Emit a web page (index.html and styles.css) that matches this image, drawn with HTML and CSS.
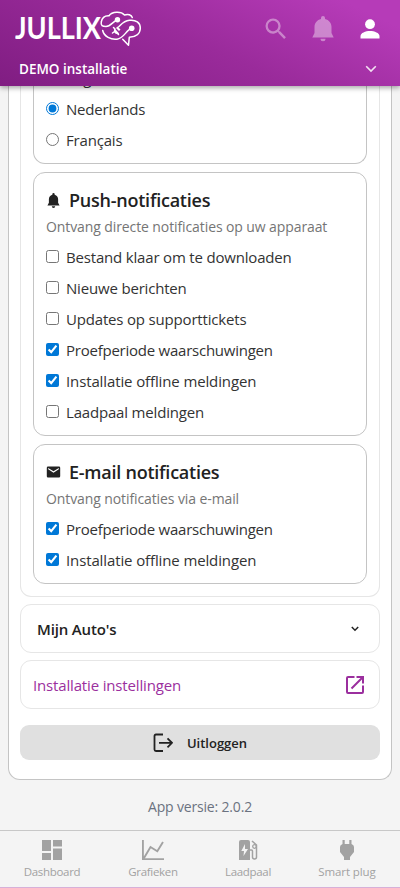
FILE: index.html
```html
<!DOCTYPE html>
<html lang="nl">
<head>
<meta charset="utf-8">
<title>Jullix</title>
<link rel="stylesheet" href="styles.css">
</head>
<body>
<header class="header">
  <div class="topbar">
    <svg class="logo" width="128" height="40" viewBox="0 0 128 40">
      <text class="logo-text" x="0" y="30.500" textLength="86" lengthAdjust="spacingAndGlyphs">JULLIX</text>
      <g fill="none" stroke="#fff" stroke-width="1.500" stroke-linecap="round" stroke-linejoin="round">
        <path d="M102.300 12C98 13 96 18.500 91 18.500C87.500 18.500 85.500 17.500 86.300 14C87 9.500 90 7.500 94 7.700C97 3.500 106 3 109.500 7C113 5.500 116.500 7 117.300 9.500"/>
        <path d="M87.700 22.500C89 28.500 96 32 102 31.200C109 30.500 111 22 116.700 20.300"/>
        <path d="M103.500 19C106 17 108 13 114.500 12.300C121 11.500 125.300 15 125.300 20C125.300 25.500 121 29 114.300 29.300L113.500 37.300L107.700 31.300"/>
        <path d="M97.500 25L99.500 23.500M98.500 19.500L100 21M102 25L103.500 26.500"/>
      </g>
      <g fill="#fff"><circle cx="102.500" cy="11.800" r="2.700"/><circle cx="116.700" cy="20.300" r="2.800"/><path d="M99.500 20.300L104.200 25.400Q101.500 27 99.300 24.500Q98 22.500 99.500 20.300M102.500 18.500l3 3-1.500 1.500-3-3z"/></g>
    </svg>
    <div class="actions">
      <svg class="dim" width="28" height="28" viewBox="0 0 24 24"><path d="M15.500 14h-.79l-.28-.27A6.471 6.471 0 0 0 16 9.500 6.500 6.500 0 1 0 9.500 16c1.610 0 3.090-.59 4.230-1.570l.27.28v.79l5 4.990L20.490 19zm-6 0C7.010 14 5 11.990 5 9.500S7.010 5 9.500 5 14 7.010 14 9.500 11.990 14 9.500 14"/></svg>
      <svg class="dim" width="22" height="26" viewBox="0 0 22 26"><path d="M9 3V2a2 2 0 0 1 4 0v1c4 1 6.500 4 6.500 8v6l2.200 4.500H.3L2.500 17v-6C2.500 7 5 4 9 3zM8.500 22.800h5a2.500 2.500 0 0 1-5 0z"/></svg>
      <svg class="user" width="20" height="20" viewBox="0 0 20 20"><circle cx="10" cy="5.200" r="4.900"/><path d="M.5 19.500V17c0-3 5-5 9.500-5s9.500 2 9.500 5v2.500z"/></svg>
    </div>
  </div>
  <div class="install">
    <span class="install-name">DEMO installatie</span>
    <svg width="12" height="8" viewBox="0 0 12 8"><path d="M1.200 1.200L6 6l4.800-4.800" fill="none" stroke="#fff" stroke-opacity=".85" stroke-width="1.600"/></svg>
  </div>
</header>

<main class="main">
  <div class="panel">
    <section class="group">
      <div class="card card-first">
        <label class="row"><input type="radio" name="lang"><span>English</span></label>
        <label class="row"><input type="radio" name="lang" checked><span>Nederlands</span></label>
        <label class="row"><input type="radio" name="lang"><span>Français</span></label>
      </div>
      <div class="card">
        <h2><svg width="15" height="15" viewBox="-2 0 26 26"><path d="M9 3V2a2 2 0 0 1 4 0v1c4 1 6 4 6 8v6l2.500 4.500H.5L3 17v-6C3 7 5 4 9 3zM8 23h6a3 3 0 0 1-6 0z"/></svg><span>Push-notificaties</span></h2>
        <p class="sub">Ontvang directe notificaties op uw apparaat</p>
        <label class="row"><input type="checkbox"><span>Bestand klaar om te downloaden</span></label>
        <label class="row"><input type="checkbox"><span>Nieuwe berichten</span></label>
        <label class="row"><input type="checkbox"><span>Updates op supporttickets</span></label>
        <label class="row"><input type="checkbox" checked><span class="tight">Proefperiode waarschuwingen</span></label>
        <label class="row"><input type="checkbox" checked><span class="loose">Installatie offline meldingen</span></label>
        <label class="row"><input type="checkbox"><span>Laadpaal meldingen</span></label>
      </div>
      <div class="card">
        <h2><svg width="15" height="12" viewBox="0 0 15 12"><path fill-rule="evenodd" d="M2 .5h11q1.200 0 1.200 1.200v8.600q0 1.200-1.200 1.200H2q-1.200 0-1.200-1.200V1.700Q.8.5 2 .5zM2.200 2v1.300L7.500 6.700l5.300-3.400V2L7.500 5.300z"/></svg><span>E-mail notificaties</span></h2>
        <p class="sub">Ontvang notificaties via e-mail</p>
        <label class="row"><input type="checkbox" checked><span class="tight">Proefperiode waarschuwingen</span></label>
        <label class="row"><input type="checkbox" checked><span class="loose">Installatie offline meldingen</span></label>
      </div>
    </section>
    <div class="link cars"><span>Mijn Auto's</span><svg width="8" height="6" viewBox="0 0 8 6"><path d="M.8 1L4 4.200 7.200 1" fill="none" stroke="#222" stroke-width="1.500"/></svg></div>
    <div class="link settings"><span>Installatie instellingen</span><svg width="20" height="20" viewBox="0 0 20 20"><path d="M9.500 2H3Q2 2 2 3v14q0 1 1 1h14q1 0 1-1v-6.500M11.500 2H18v6.500M18 2L6.500 13.500" fill="none" stroke="#9b2f9e" stroke-width="2"/></svg></div>
    <button class="logout"><svg width="20" height="20" viewBox="0 0 20 20"><path d="M10 1.500H3Q1.500 1.500 1.500 3v13.500Q1.500 18 3 18h7M6 9.800h12.500M14.500 5.300L19 9.800l-4.500 4.500" fill="none" stroke="#222" stroke-width="1.800"/></svg><span>Uitloggen</span></button>
  </div>
  <p class="version">App versie: 2.0.2</p>
</main>

<nav class="nav">
  <a class="tab"><svg width="22" height="22" viewBox="0 0 22 22"><path d="M1 1h9v11H1zM12 1h9v6.500h-9zM1 14h9v7H1zM12 9.500h9V21h-9z"/></svg><span>Dashboard</span></a>
  <a class="tab"><svg width="22" height="22" viewBox="0 0 22 22"><path d="M.9 1v19.100H22M2 19L8.500 8l6.800 4.200L21 3" fill="none" stroke="#a2a2a2" stroke-width="1.900"/></svg><span>Grafieken</span></a>
  <a class="tab"><svg width="20" height="22" viewBox="0 0 20 22"><path fill-rule="evenodd" d="M3 1h7q2 0 2 2v18H1V3q0-2 2-2zM7 5L3.300 12H6l-.5 5L10 10H7z"/><path d="M12 11h1.500q1 0 1 1v6q0 2 2 2t2-2V6L14 2" fill="none" stroke="#a2a2a2" stroke-width="1.500"/><circle cx="16.500" cy="7.500" r="1.800" fill="none" stroke="#a2a2a2" stroke-width="1.300"/></svg><span>Laadpaal</span></a>
  <a class="tab"><svg width="16" height="22" viewBox="0 0 16 22"><path d="M3.500 1h2.200v4h4.600V1h2.200v4Q15 6 15 8v5l-4 5v3H5v-3l-4-5V8q0-2 2.500-3z"/></svg><span class="plug">Smart plug</span></a>
</nav>
</body>
</html>
```
FILE: styles.css
```css
* { box-sizing: border-box; }

body {
  margin: 0;
  height: 888px;
  display: flex;
  flex-direction: column;
  overflow: hidden;
  background: #f4f4f4;
  color: #333;
  font-family: "Open Sans", "Noto Sans", sans-serif;
  font-size: 15px;
}

svg { display: block; flex: none; }

.header {
  flex: 0 0 86px;
  z-index: 1;
  background: linear-gradient(25deg, #801d82, #9a2b9b 50%, #b63bb8 90%);
  box-shadow: 0 2px 5px rgba(0, 0, 0, .35);
  color: #fff;
}

.topbar {
  display: flex;
  justify-content: space-between;
  height: 56px;
  padding: 8px 20px 0 15px;
}

.logo-text {
  font: 700 30px Lato, sans-serif;
  fill: #fff;
}

.actions {
  display: flex;
  align-items: center;
  gap: 22px;
  height: 41px;
  fill: #fff;
}

.user { margin-left: 4px; }

.dim { opacity: .4; }

.install {
  display: flex;
  align-items: center;
  justify-content: space-between;
  height: 26px;
  padding: 0 23px 0 19px;
}

.install-name {
  font-size: 13.500px;
  font-weight: 600;
}

.main {
  flex: 1;
  display: flex;
  flex-direction: column;
  justify-content: flex-end;
  min-height: 0;
  overflow: hidden;
  padding: 0 8px;
}

.panel {
  flex: none;
  padding: 0 12px 19px;
  border: 1px solid #c4c4c4;
  border-top: 0;
  border-radius: 0 0 12px 12px;
  background: #fff;
}

.group {
  padding: 0 12px 12px;
  border: 1px solid #e6e6e6;
  border-top: 0;
  border-radius: 0 0 11px 11px;
  margin: 0 -1px 7px;
}

.card {
  padding: 11px 11px 8px 12px;
  border: 1px solid #c4c4c4;
  border-radius: 12px;
  margin-top: 8px;
}

.card-first {
  margin-top: 0;
  padding-top: 0;
  border-top: 0;
  border-radius: 0 0 12px 12px;
}

.card h2 {
  display: flex;
  align-items: center;
  gap: 8px;
  height: 32px;
  margin: 0;
  color: #222;
  fill: #222;
  font-size: 18px;
  font-weight: 600;
  letter-spacing: -.24px;
}

.sub {
  height: 25px;
  margin: 0;
  line-height: 22px;
  font-size: 14px;
  letter-spacing: -.1px;
  color: #757575;
}

.row {
  display: flex;
  align-items: center;
  gap: 7px;
  height: 31px;
  letter-spacing: -.18px;
}

.row .tight { letter-spacing: -.24px; }

.row .loose { letter-spacing: -.12px; }

.row input {
  width: 13px;
  height: 13px;
  margin: 0;
  accent-color: #0078d7;
}

.link {
  display: flex;
  align-items: center;
  justify-content: space-between;
  height: 49px;
  margin: 0 -1px 8px;
  padding: 0 14px 0 12px;
  border: 1px solid #e6e6e6;
  border-radius: 11px;
  letter-spacing: -.16px;
}

.cars {
  padding: 0 20px 0 16px;
  margin-bottom: 7px;
  color: #222;
  font-weight: 600;
}

.settings {
  margin-bottom: 16px;
  color: #9b2f9e;
}

.logout {
  display: flex;
  align-items: center;
  justify-content: center;
  gap: 14px;
  width: calc(100% + 2px);
  height: 35px;
  margin: 0 -1px;
  padding: 0;
  border: 0;
  border-radius: 9px;
  background: #e0e0e0;
  color: #222;
  font: 600 13px "Open Sans", sans-serif;
}

.version {
  flex: none;
  height: 50px;
  margin: 0;
  line-height: 54px;
  text-align: center;
  font-size: 14px;
  letter-spacing: -.17px;
  color: #6b7280;
}

.nav {
  flex: 0 0 58px;
  display: grid;
  grid-template-columns: 104px 98px 92px 106px;
  border-top: 1px solid #c8c8c8;
  border-bottom: 1px solid #d6b0d8;
  color: #a2a2a2;
  fill: #a2a2a2;
  font-size: 11.500px;
}

.tab {
  display: flex;
  flex-direction: column;
  align-items: center;
  padding-top: 8px;
}

.tab span {
  line-height: 16px;
  margin-top: 3px;
  letter-spacing: -.32px;
}

.tab .plug { letter-spacing: -.1px; }
```
